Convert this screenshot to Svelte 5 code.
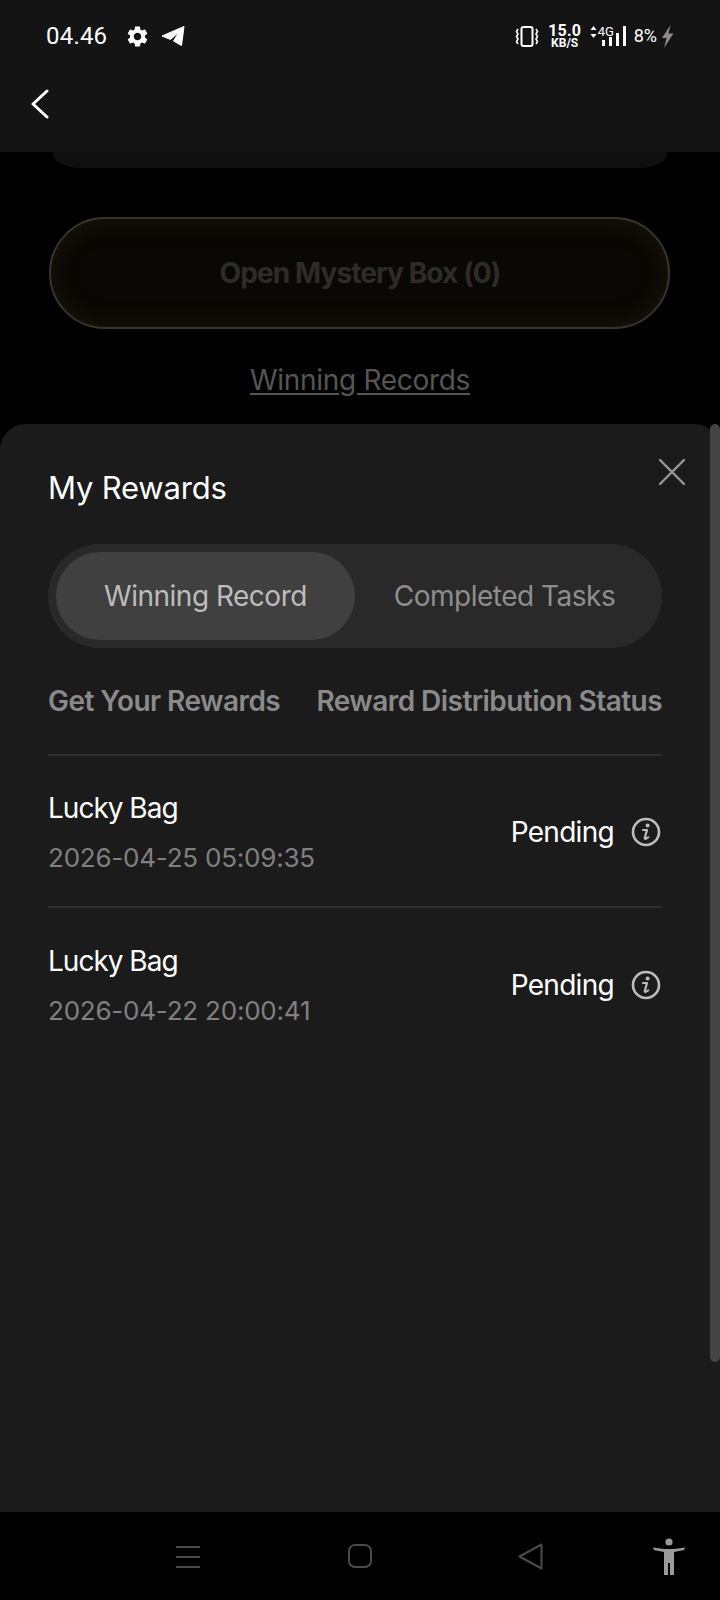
<script>
	const rewards = [
		{ name: 'Lucky Bag', time: '2026-04-25 05:09:35', status: 'Pending' },
		{ name: 'Lucky Bag', time: '2026-04-22 20:00:41', status: 'Pending' }
	];
	const bars = [6, 9, 13, 20];
</script>

<div class="screen">
	<header class="top">
		<div class="status">
			<div class="status-left">
				<span class="clock">04.46</span>
				<svg class="gear" viewBox="0 0 24 24" fill="#fff">
					<path
						d="M19.14 12.94c.04-.3.06-.61.06-.94 0-.32-.02-.64-.07-.94l2.03-1.58c.18-.14.23-.41.12-.61l-1.92-3.32c-.12-.22-.37-.29-.59-.22l-2.39.96c-.5-.38-1.03-.7-1.62-.94l-.36-2.54c-.04-.24-.24-.41-.48-.41h-3.84c-.24 0-.43.17-.47.41l-.36 2.54c-.59.24-1.13.57-1.62.94l-2.39-.96c-.22-.08-.47 0-.59.22L2.74 8.87c-.12.21-.08.47.12.61l2.03 1.58c-.05.3-.09.63-.09.94s.02.64.07.94l-2.03 1.58c-.18.14-.23.41-.12.61l1.92 3.32c.12.22.37.29.59.22l2.39-.96c.5.38 1.03.7 1.62.94l.36 2.54c.05.24.24.41.48.41h3.84c.24 0 .44-.17.47-.41l.36-2.54c.59-.24 1.13-.56 1.62-.94l2.39.96c.22.08.47 0 .59-.22l1.92-3.32c.12-.22.07-.47-.12-.61l-2.01-1.58zM12 15.6c-1.98 0-3.6-1.62-3.6-3.6s1.62-3.6 3.6-3.6 3.6 1.62 3.6 3.6-1.62 3.6-3.6 3.6z"
					/>
				</svg>
				<svg class="plane" viewBox="0 0 24 20" fill="#fff">
					<path d="M23 0.5 L1 10 L9.5 13.5 L18 6 L12.5 15 L20.5 19.5 Z" stroke="#fff" stroke-linejoin="round" />
				</svg>
			</div>
			<div class="status-right">
				<svg class="vibrate" viewBox="0 0 24 21" fill="none" stroke="#fff">
					<rect x="6.5" y="1" width="11" height="19" rx="2" stroke-width="2" />
					<path d="M3 3 L1.5 5.5 L3 8 L1.5 10.5 L3 13 L1.5 15.5 L3 18 M21 3 L22.5 5.5 L21 8 L22.5 10.5 L21 13 L22.5 15.5 L21 18" stroke-width="1.6" />
				</svg>
				<div class="speed">
					<span class="speed-num">15.0</span>
					<span class="speed-unit">KB/S</span>
				</div>
				<svg class="updown" viewBox="0 0 7 12" fill="#fff">
					<path d="M3.5 0 L6.5 4 H0.5 Z M3.5 12 L0.5 8 H6.5 Z" />
				</svg>
				<div class="signal">
					<span class="net">4G</span>
					<div class="bars">
						{#each bars as h}
							<i style="height: {h}px"></i>
						{/each}
					</div>
				</div>
				<span class="battery">8%</span>
				<svg class="bolt" viewBox="0 0 13 23" fill="#8a8a8a">
					<path d="M9.5 0 L1 13 H5.5 L3 23 L12.5 8.5 H7.5 Z" />
				</svg>
			</div>
		</div>
		<button class="back" aria-label="Back">
			<svg width="18" height="30" viewBox="0 0 18 30" fill="none" stroke="#fff" stroke-width="3" stroke-linecap="round" stroke-linejoin="round">
				<path d="M16 2 L2 15 L16 28" />
			</svg>
		</button>
	</header>

	<div class="card-end"></div>

	<button class="open-box">Open Mystery Box (0)</button>
	<a class="records-link" href="#records">Winning Records</a>

	<section class="sheet">
		<div class="scrollbar"></div>
		<div class="sheet-head">
			<h2>My Rewards</h2>
			<button class="close" aria-label="Close">
				<svg width="28" height="28" viewBox="0 0 28 28" stroke="#999" stroke-width="2.4" stroke-linecap="round">
					<path d="M2 2 L26 26 M26 2 L2 26" />
				</svg>
			</button>
		</div>

		<div class="tabs">
			<div class="tab active">Winning Record</div>
			<div class="tab">Completed Tasks</div>
		</div>

		<div class="cols">
			<span>Get Your Rewards</span>
			<span>Reward Distribution Status</span>
		</div>

		{#each rewards as item}
			<div class="row">
				<div class="row-left">
					<div class="name">{item.name}</div>
					<div class="time">{item.time}</div>
				</div>
				<div class="row-right">
					<span class="pending">{item.status}</span>
					<svg class="info" viewBox="0 0 30 30" fill="none">
						<circle cx="15" cy="15" r="13" stroke="#bdbdbd" stroke-width="2.6" />
						<circle cx="16.6" cy="8.6" r="2" fill="#bdbdbd" />
						<path d="M12 13 H16 L13.8 20.8 Q13.4 22.2 15 21.6 L17.2 20.4" stroke="#bdbdbd" stroke-width="2.2" stroke-linecap="round" stroke-linejoin="round" />
					</svg>
				</div>
			</div>
		{/each}
	</section>

	<nav class="nav">
		<svg class="nav-menu" viewBox="0 0 24 22" stroke="#4a4a4a" stroke-width="2">
			<path d="M0 1 H24 M0 11 H24 M0 21 H24" />
		</svg>
		<svg class="nav-home" viewBox="0 0 24 24" fill="none" stroke="#4a4a4a" stroke-width="2">
			<rect x="1" y="1" width="22" height="22" rx="6" />
		</svg>
		<svg class="nav-back" viewBox="0 0 25 27" fill="none" stroke="#4a4a4a" stroke-width="2" stroke-linejoin="round">
			<path d="M23.5 1.5 V25.5 L1.5 13.5 Z" />
		</svg>
		<svg class="nav-a11y" viewBox="0 0 32 37" fill="#9a9a9a">
			<circle cx="16" cy="4" r="3.6" />
			<path d="M0 9.5 L1 12 L11 14 V37 H15 V25 H17 V37 H21 V14 L31 12 L32 9.5 L21 11 H11 Z" />
		</svg>
	</nav>
</div>

<style>
	:global(body) {
		margin: 0;
		background: #000;
	}

	.screen {
		width: 720px;
		height: 1600px;
		background: #000;
		display: flex;
		flex-direction: column;
		overflow: hidden;
		font-family: Inter, 'Liberation Sans', sans-serif;
	}

	.top {
		height: 152px;
		background: #141414;
		flex-shrink: 0;
	}

	.status {
		height: 72px;
		display: flex;
		justify-content: space-between;
		align-items: center;
		padding: 0 46px;
		box-sizing: border-box;
		color: #fff;
		font-family: Roboto, sans-serif;
	}

	.status-left {
		display: flex;
		align-items: center;
	}

	.clock {
		font-size: 24px;
		line-height: 1;
		width: 79px;
		letter-spacing: 0.2px;
	}

	.gear {
		width: 25px;
		height: 25px;
		margin-right: 11px;
	}

	.plane {
		width: 24px;
		height: 20px;
	}

	.status-right {
		display: flex;
		align-items: center;
	}

	.vibrate {
		width: 24px;
		height: 21px;
		margin-right: 10px;
	}

	.speed {
		display: flex;
		flex-direction: column;
		align-items: center;
		gap: 1px;
		font-weight: 700;
		margin-right: 9px;
		width: 32px;
	}

	.speed-num {
		font-size: 16px;
		line-height: 13px;
		letter-spacing: 0.2px;
	}

	.speed-unit {
		font-size: 12px;
		line-height: 11px;
	}

	.updown {
		width: 7px;
		height: 12px;
		margin: 0 1px 8px 0;
	}

	.signal {
		position: relative;
		width: 29px;
		height: 24px;
		margin-right: 7px;
	}

	.net {
		position: absolute;
		left: 0;
		top: 2px;
		font-size: 13px;
		line-height: 12px;
	}

	.bars {
		position: absolute;
		left: 4px;
		right: 0;
		bottom: 2px;
		display: flex;
		align-items: flex-end;
		gap: 3.5px;
	}

	.bars i {
		display: block;
		width: 3.5px;
		background: #fff;
	}

	.battery {
		font-size: 18px;
		line-height: 1;
		margin-right: 4px;
	}

	.bolt {
		width: 13px;
		height: 23px;
	}

	.back {
		display: block;
		background: none;
		border: 0;
		padding: 0;
		margin: 17px 0 0 31px;
		width: 18px;
		height: 30px;
	}

	.card-end {
		height: 16px;
		margin: 0 52px;
		background: #0f0f0f;
		border-radius: 0 0 28px 28px / 0 0 16px 16px;
		flex-shrink: 0;
	}

	.open-box {
		flex-shrink: 0;
		height: 112px;
		margin: 49px 50px 0 49px;
		border: 2px solid #3a342b;
		border-radius: 56px;
		background: #0a0804;
		box-shadow: inset 0 0 22px #1c160d;
		color: #2f2c28;
		font: 700 28px Inter, sans-serif;
		letter-spacing: -0.9px;
		padding: 0 0 0 1px;
	}

	.records-link {
		flex-shrink: 0;
		height: 40px;
		margin-top: 31px;
		line-height: 40px;
		text-align: center;
		font-size: 28px;
		letter-spacing: -0.3px;
		color: #555;
		text-underline-offset: 3px;
	}

	.sheet {
		position: relative;
		flex-shrink: 0;
		height: 1088px;
		margin-top: 24px;
		background: #1b1b1b;
		border-radius: 26px 26px 0 0;
		padding: 0 58px 0 48px;
		box-sizing: border-box;
		color: #fff;
	}

	.scrollbar {
		position: absolute;
		right: 0;
		top: 0;
		width: 10px;
		height: 938px;
		background: #444;
		border-radius: 6px;
	}

	.sheet-head {
		position: relative;
		height: 120px;
	}

	h2 {
		margin: 0;
		padding-top: 44px;
		font-size: 31px;
		line-height: 40px;
		font-weight: 400;
		letter-spacing: -0.2px;
	}

	.close {
		position: absolute;
		right: -24px;
		top: 34px;
		width: 28px;
		height: 28px;
		padding: 0;
		border: 0;
		background: none;
	}

	.tabs {
		height: 104px;
		padding: 8px;
		box-sizing: border-box;
		background: #292929;
		border-radius: 52px;
		display: flex;
	}

	.tab {
		width: 299px;
		border-radius: 44px;
		display: flex;
		align-items: center;
		justify-content: center;
		font-size: 28px;
		letter-spacing: -0.5px;
		color: #8e8e8e;
	}

	.tab.active {
		background: #404040;
		color: #bcbcbc;
	}

	.cols {
		height: 108px;
		display: flex;
		justify-content: space-between;
		align-items: center;
		border-bottom: 2px solid #2e2e2e;
		box-sizing: border-box;
		font-size: 28px;
		font-weight: 600;
		letter-spacing: -0.55px;
		color: #8a8a8a;
	}

	.row {
		height: 152px;
		display: flex;
		justify-content: space-between;
		align-items: center;
		border-bottom: 2px solid #2e2e2e;
		box-sizing: border-box;
		padding-top: 2px;
	}

	.row:last-child {
		border-bottom: 0;
	}

	.row-left {
		padding-top: 2px;
	}

	.name {
		font-size: 28px;
		line-height: 36px;
		letter-spacing: -1px;
	}

	.time {
		margin-top: 14px;
		font-size: 26px;
		line-height: 36px;
		letter-spacing: -0.22px;
		color: #808080;
	}

	.row-right {
		display: flex;
		align-items: center;
		gap: 17px;
		margin-right: 1px;
	}

	.pending {
		font-size: 28px;
		letter-spacing: -0.7px;
	}

	.info {
		width: 30px;
		height: 30px;
	}

	.nav {
		position: relative;
		height: 88px;
		flex-shrink: 0;
		background: #000;
	}

	.nav svg {
		position: absolute;
	}

	.nav-menu {
		left: 176px;
		top: 34px;
		width: 24px;
		height: 22px;
	}

	.nav-home {
		left: 348px;
		top: 32px;
		width: 24px;
		height: 24px;
	}

	.nav-back {
		left: 518px;
		top: 31px;
		width: 25px;
		height: 27px;
	}

	.nav-a11y {
		left: 653px;
		top: 26px;
		width: 32px;
		height: 37px;
	}
</style>
